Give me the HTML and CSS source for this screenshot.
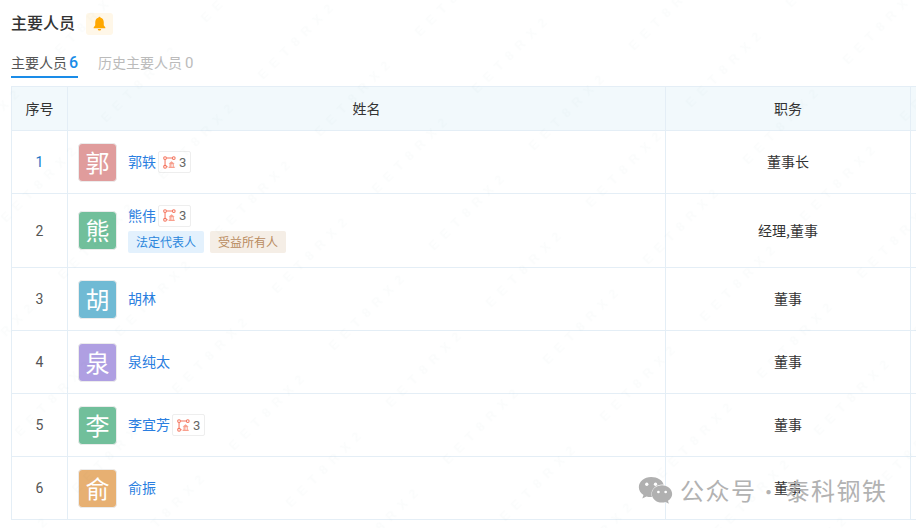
FILE: index.html
```html
<!DOCTYPE html>
<html lang="zh">
<head>
<meta charset="utf-8">
<title>主要人员</title>
<link rel="stylesheet" href="styles.css">
</head>
<body>
<svg class="defs" width="0" height="0" aria-hidden="true">
  <symbol id="rel" viewBox="0 0 14 14">
    <g fill="none" stroke="#f4735c" stroke-width="1.1">
      <circle cx="2.2" cy="2.2" r="1.5"/>
      <circle cx="11.6" cy="2.2" r="1.5"/>
      <circle cx="2.2" cy="11.6" r="1.5"/>
      <path d="M3.8 2.2H10M2.2 3.800V10M3.800 11.600H5"/>
    </g>
    <path d="M9.200 5.600 6 8.400h1v3.200H6v1.200h6.600v-1.200h-1V8.400h1z" fill="#f9a08e"/>
    <path d="M8.400 9h.8v2.600h-.8zM9.800 9h.8v2.600h-.8z" fill="#fff"/>
  </symbol>
</svg>
<main class="page">
  <header class="title-row">
    <h1 class="title">主要人员</h1>
    <span class="bell-box">
      <svg class="bell" viewBox="0 0 14 16" width="13" height="15"><path d="M7 .8c.7 0 1.100.4 1.200 1C10.400 2.400 11.600 4.200 11.600 6.600V10l1.700 2.300v.7H.7v-.7L2.400 10V6.600C2.400 4.200 3.600 2.400 5.800 1.800 5.900 1.200 6.300.8 7 .8zM5.200 13.800h3.600C8.700 14.900 8 15.500 7 15.500s-1.700-.6-1.800-1.700z" fill="#ffa800"/></svg>
    </span>
  </header>
  <nav class="tabs">
    <span class="tab active">主要人员<b class="count">6</b></span>
    <span class="tab">历史主要人员<span class="count-muted">0</span></span>
  </nav>
  <table class="staff">
    <colgroup><col class="c-no"><col class="c-name"><col class="c-role"><col class="c-rest"></colgroup>
    <thead>
      <tr><th>序号</th><th>姓名</th><th>职务</th><th></th></tr>
    </thead>
    <tbody>
      <tr class="r63">
        <td class="no first">1</td>
        <td><div class="person"><span class="avatar red">郭</span><div class="info"><div class="name-line"><a class="name">郭轶</a><span class="rel"><svg class="rel-icon"><use href="#rel"/></svg>3</span></div></div></div></td>
        <td class="role">董事长</td><td></td>
      </tr>
      <tr class="r74">
        <td class="no">2</td>
        <td><div class="person"><span class="avatar green">熊</span><div class="info with-tags"><div class="name-line"><a class="name">熊伟</a><span class="rel"><svg class="rel-icon"><use href="#rel"/></svg>3</span></div><div class="tags"><span class="tag blue">法定代表人</span><span class="tag tan">受益所有人</span></div></div></div></td>
        <td class="role">经理,董事</td><td></td>
      </tr>
      <tr class="r63">
        <td class="no">3</td>
        <td><div class="person"><span class="avatar sky">胡</span><div class="info"><div class="name-line"><a class="name">胡林</a></div></div></div></td>
        <td class="role">董事</td><td></td>
      </tr>
      <tr class="r63">
        <td class="no">4</td>
        <td><div class="person"><span class="avatar purple">泉</span><div class="info"><div class="name-line"><a class="name">泉纯太</a></div></div></div></td>
        <td class="role">董事</td><td></td>
      </tr>
      <tr class="r63">
        <td class="no">5</td>
        <td><div class="person"><span class="avatar green">李</span><div class="info"><div class="name-line"><a class="name">李宜芳</a><span class="rel"><svg class="rel-icon"><use href="#rel"/></svg>3</span></div></div></div></td>
        <td class="role">董事</td><td></td>
      </tr>
      <tr class="r63">
        <td class="no">6</td>
        <td><div class="person"><span class="avatar orange">俞</span><div class="info"><div class="name-line"><a class="name">俞振</a></div></div></div></td>
        <td class="role">董事</td><td></td>
      </tr>
    </tbody>
  </table>
</main>
<svg class="faint" width="916" height="528" aria-hidden="true">
  <defs>
    <pattern id="faint-tile" width="141.400" height="80.600" patternUnits="userSpaceOnUse" patternTransform="translate(249 66) rotate(-45)">
      <text x="0" y="20" class="faint-text">EET8RX2</text>
    </pattern>
  </defs>
  <rect width="916" height="528" fill="url(#faint-tile)"/>
</svg>
<div class="wm">
  <svg class="wm-logo" viewBox="0 0 36 32" width="35" height="31">
    <path d="M13.500 1C6.400 1 .8 5.600.8 11.500c0 3.400 1.900 6.200 4.800 8.200l-1.200 3.600 4.200-2.100c1.500.4 3 .6 4.500.6l1.200-.1c-.3-1-.4-2-.4-3 0-5.400 5.100-9.800 11.500-9.800l1 .1C25.400 4.300 20 1 13.500 1z" fill="#b0b0b0"/>
    <path d="M35.200 18.500c0-4.900-4.900-8.900-10.500-8.900-5.900 0-10.500 4-10.500 8.900s4.600 8.900 10.500 8.900c1.200 0 2.500-.3 3.700-.6l3.400 1.900-.9-3.100c2.600-1.900 4.300-4.400 4.300-7.100z" fill="#b0b0b0"/>
    <circle cx="9" cy="8.500" r="1.700" fill="#fff"/><circle cx="18" cy="8.500" r="1.700" fill="#fff"/>
    <circle cx="21" cy="16.500" r="1.400" fill="#fff"/><circle cx="28.500" cy="16.500" r="1.400" fill="#fff"/>
  </svg>
  <span class="wm-text">公众号<span class="wm-dot">·</span>泰科钢铁</span>
</div>
</body>
</html>
```
FILE: styles.css
```css
* { box-sizing: border-box; }
html, body { margin: 0; padding: 0; }
body {
  width: 916px;
  height: 528px;
  overflow: hidden;
  background: #fff;
  position: relative;
  font-family: "Noto Sans CJK SC", "Noto Sans", sans-serif;
  color: #333;
  font-size: 14px;
}
.defs { position: absolute; }
.page { padding: 11px 0 0 11px; width: 916px; }
.title-row { display: flex; align-items: center; gap: 11px; height: 23px; }
.title { margin: 0; font-size: 16px; font-weight: 500; line-height: 23px; color: #333; }
.bell-box {
  width: 27px; height: 22px; border-radius: 3px; background: #fff7e8;
  display: flex; align-items: center; justify-content: center; margin-top: 2px;
}
.bell { display: block; }
.tabs { display: flex; gap: 20px; margin: 14px 0 8px; height: 30px; }
.tab { color: #bbb; font-size: 14px; line-height: 24px; height: 30px; padding-top: 2px; white-space: nowrap; }
.tab.active { color: #555; border-bottom: 2px solid #1a8ce8; }
.count { color: #1a8ce8; font-size: 16px; font-weight: 500; font-family: Roboto, sans-serif; margin-left: 3px; }
.count-muted { font-size: 15px; font-family: Roboto, sans-serif; margin-left: 3px; }
.tab.active .count { margin-left: 2px; }
.staff {
  border-collapse: collapse;
  table-layout: fixed;
  width: 915px;
}
.c-no { width: 56px; }
.c-name { width: 598px; }
.c-role { width: 245px; }
.c-rest { width: 16px; }
.staff th, .staff td { border: 1px solid #e4eef6; padding: 0; text-align: center; }
.staff th {
  height: 44px; background: #f2f9fc; font-weight: 400; font-size: 14px; color: #333; padding-bottom: 2px;
}
.staff tr > :last-child { border-right: 0; }
.r63 td { height: 63px; }
.r74 td { height: 74px; }
.no { color: #555; font-size: 14px; font-family: Roboto, sans-serif; }
.no.first { color: #1e78c8; }
.staff td.role { color: #333; font-size: 14px; padding-bottom: 2px; }
.person { display: flex; align-items: center; gap: 10px; padding-left: 11px; text-align: left; }
.avatar {
  width: 39px; height: 39px; flex: none; border-radius: 4px; border: 1px solid #ececec;
  color: #fff; font-size: 24px; line-height: 36px; text-align: center; margin-left: -1px;
}
.red { background: #e09c9c; }
.green { background: #71bf9b; }
.sky { background: #70bad4; }
.purple { background: #af9fe2; }
.orange { background: #e7b072; }
.info { display: flex; flex-direction: column; gap: 4px; padding-left: 1px; }
.info.with-tags { margin-top: -4px; }
.name-line { display: flex; align-items: center; gap: 2px; height: 22px; }
.name { color: #2a7ee0; font-size: 14px; line-height: 20px; padding-bottom: 2px; }
.rel {
  display: flex; align-items: center; gap: 3px; height: 22px; width: 33px; padding: 0 0 0 4px;
  border: 1px solid #eee; border-radius: 2px; color: #666; font-size: 13px;
  font-family: Roboto, sans-serif;
}
.rel-icon { width: 13px; height: 13px; display: block; flex: none; }
.tags { display: flex; gap: 6px; }
.tag { height: 22px; line-height: 21px; width: 76px; text-align: center; border-radius: 2px; font-size: 12px; }
.blue { background: #e3f1fd; color: #2a86dc; }
.tan { background: #f5eee6; color: #b98b5e; }
.faint { position: absolute; left: 0; top: 0; pointer-events: none; }
.faint-text {
  font-family: "Liberation Sans", sans-serif; font-size: 13px; font-weight: 700;
  letter-spacing: 7px; fill: rgba(30, 40, 60, .016);
}
.wm {
  position: absolute; left: 638px; top: 473px; display: flex; align-items: center; gap: 7px;
  color: #b2b2b2; pointer-events: none;
}
.wm-text { font-size: 24px; line-height: 34px; letter-spacing: 1.500px; white-space: nowrap; }
.wm-dot { display: inline-block; width: 29px; text-align: left; text-indent: 2px; letter-spacing: 0; font-size: 20px; }
.wm-logo { display: block; }
```
